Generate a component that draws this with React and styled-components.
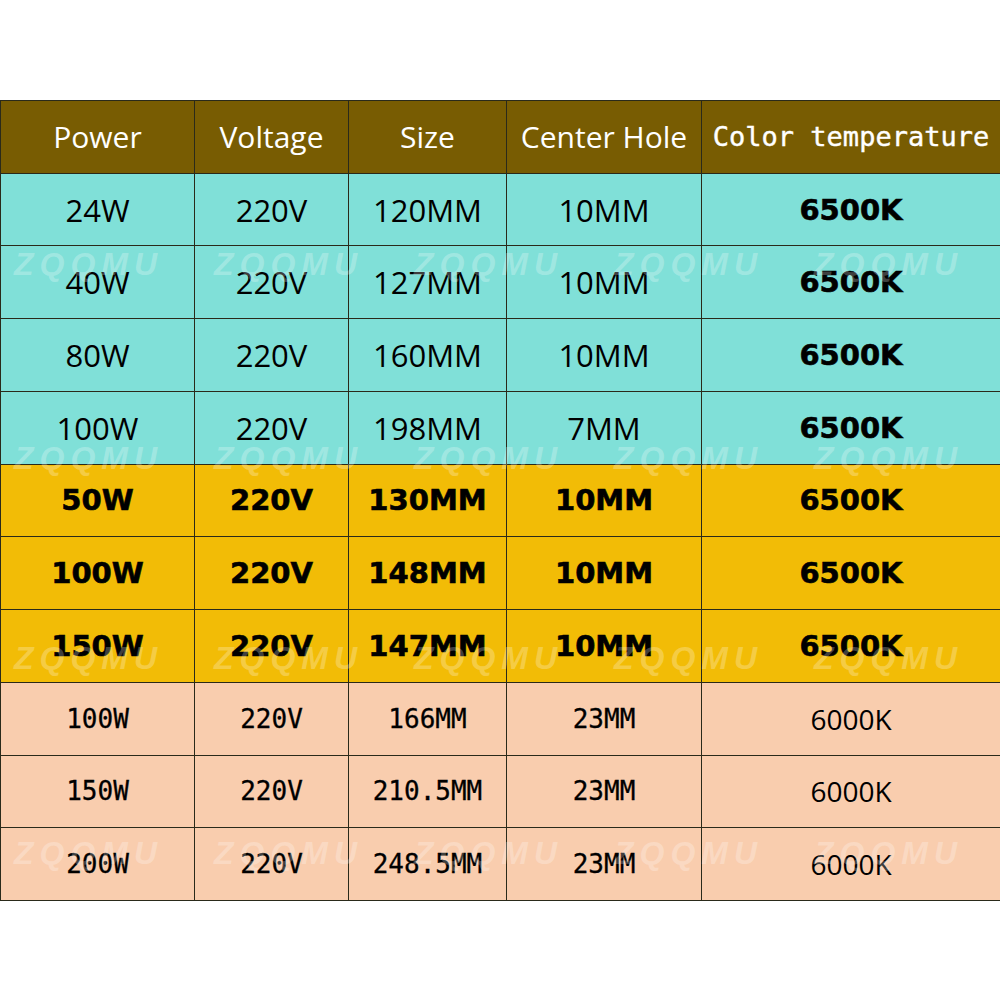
import React from 'react';
import styled, { createGlobalStyle, css } from 'styled-components';

const GlobalStyle = createGlobalStyle`
  html, body {
    margin: 0;
    padding: 0;
    background: #fff;
  }
`;

const Page = styled.div`
  width: 1000px;
  height: 1000px;
  padding-top: 100px;
  box-sizing: border-box;
  background: #fff;
`;

const TableWrap = styled.div`
  position: relative;
  width: 1000px;
  height: 801px;
`;

const Grid = styled.div`
  display: grid;
  grid-template-columns: 194px 154px 158px 195px 299px;
  grid-template-rows: repeat(11, 1fr);
  height: 100%;
  border-top: 1px solid #2a2a1a;
  border-left: 1px solid #2a2a1a;
  box-sizing: border-box;
`;

const bgs = {
  head: '#785c02',
  teal: '#80e0d8',
  gold: '#f2bc06',
  peach: '#f9cdae',
};

const fonts = {
  head: css`
    font-family: 'Open Sans', 'Noto Sans', sans-serif;
    font-size: 30px;
    color: #fff;
  `,
  headMono: css`
    font-family: 'DejaVu Sans Mono', monospace;
    font-size: 27px;
    color: #fff;
    -webkit-text-stroke: 0.4px #fff;
  `,
  plain: css`
    font-family: 'Open Sans', 'Noto Sans', sans-serif;
    font-size: 31px;
    color: #000;
  `,
  heavy: css`
    font-family: 'DejaVu Sans', sans-serif;
    font-weight: bold;
    font-size: 29px;
    color: #000;
    -webkit-text-stroke: 0.6px #000;
  `,
  mono: css`
    font-family: 'DejaVu Sans Mono', monospace;
    font-size: 26px;
    color: #000;
    -webkit-text-stroke: 0.3px #000;
  `,
  soft: css`
    font-family: 'Open Sans', 'Noto Sans', sans-serif;
    font-size: 28px;
    color: #000;
  `,
};

const Cell = styled.div`
  display: flex;
  align-items: center;
  justify-content: center;
  white-space: nowrap;
  background: ${({ $bg }) => bgs[$bg]};
  border-right: 1px solid #2a2a1a;
  border-bottom: 1px solid #2a2a1a;
  ${({ $font }) => fonts[$font]}
`;

const Watermarks = styled.div`
  position: absolute;
  inset: 0;
  pointer-events: none;
  overflow: hidden;
`;

const Mark = styled.span`
  position: absolute;
  font-family: 'Liberation Sans', Arial, sans-serif;
  font-weight: bold;
  font-style: italic;
  font-size: 32px;
  letter-spacing: 6px;
  line-height: 1;
  color: rgba(255, 255, 255, 0.26);
`;

const header = ['Power', 'Voltage', 'Size', 'Center Hole', 'Color temperature'];

const rows = [
  { bg: 'teal', cells: ['24W', '220V', '120MM', '10MM', '6500K'] },
  { bg: 'teal', cells: ['40W', '220V', '127MM', '10MM', '6500K'] },
  { bg: 'teal', cells: ['80W', '220V', '160MM', '10MM', '6500K'] },
  { bg: 'teal', cells: ['100W', '220V', '198MM', '7MM', '6500K'] },
  { bg: 'gold', cells: ['50W', '220V', '130MM', '10MM', '6500K'] },
  { bg: 'gold', cells: ['100W', '220V', '148MM', '10MM', '6500K'] },
  { bg: 'gold', cells: ['150W', '220V', '147MM', '10MM', '6500K'] },
  { bg: 'peach', cells: ['100W', '220V', '166MM', '23MM', '6000K'] },
  { bg: 'peach', cells: ['150W', '220V', '210.5MM', '23MM', '6000K'] },
  { bg: 'peach', cells: ['200W', '220V', '248.5MM', '23MM', '6000K'] },
];

const fontFor = (bg, i) => {
  if (bg === 'teal') return i === 4 ? 'heavy' : 'plain';
  if (bg === 'gold') return 'heavy';
  return i === 4 ? 'soft' : 'mono';
};

const markRows = [148, 342, 542, 737];
const markCols = [14, 214, 414, 614, 814];

const App = () => {
  return (
    <Page>
      <GlobalStyle />
      <TableWrap>
        <Grid>
          {header.map((h, i) => (
            <Cell key={h} $bg="head" $font={i === 4 ? 'headMono' : 'head'}>
              {h}
            </Cell>
          ))}
          {rows.map((r, ri) =>
            r.cells.map((c, i) => (
              <Cell key={`${ri}-${i}`} $bg={r.bg} $font={fontFor(r.bg, i)}>
                {c}
              </Cell>
            ))
          )}
        </Grid>
        <Watermarks>
          {markRows.map((top) =>
            markCols.map((left) => (
              <Mark key={`${top}-${left}`} style={{ top, left }}>
                ZQQMU
              </Mark>
            ))
          )}
        </Watermarks>
      </TableWrap>
    </Page>
  );
};

export default App;
